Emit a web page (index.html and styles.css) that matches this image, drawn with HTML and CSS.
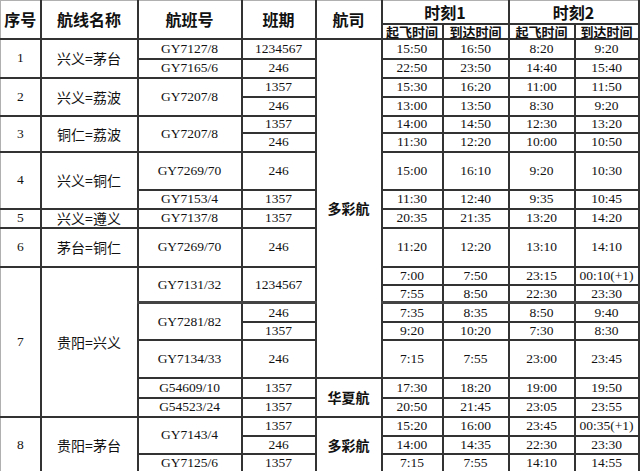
FILE: index.html
```html
<!DOCTYPE html>
<html lang="zh-CN">
<head>
<meta charset="utf-8">
<title>航班时刻表</title>
<link rel="stylesheet" href="styles.css">
</head>
<body>
<table class="sched">
  <colgroup>
    <col class="c-seq"><col class="c-route"><col class="c-flight"><col class="c-days"><col class="c-air">
    <col class="c-t1"><col class="c-t2"><col class="c-t3"><col class="c-t4">
  </colgroup>
  <thead>
    <tr class="r23 top">
      <th rowspan="2" class="hd first">序号</th>
      <th rowspan="2" class="hd">航线名称</th>
      <th rowspan="2" class="hd">航班号</th>
      <th rowspan="2" class="hd">班期</th>
      <th rowspan="2" class="hd">航司</th>
      <th colspan="2" class="hd">时刻1</th>
      <th colspan="2" class="hd">时刻2</th>
    </tr>
    <tr class="r15">
      <th class="sub">起飞时间</th><th class="sub">到达时间</th>
      <th class="sub">起飞时间</th><th class="sub">到达时间</th>
    </tr>
  </thead>
  <tbody>
    <tr class="r20">
      <td rowspan="2" class="first">1</td><td rowspan="2" class="cn">兴义=茅台</td><td>GY7127/8</td><td>1234567</td>
      <td rowspan="15" class="cn air">多彩航</td>
      <td>15:50</td><td>16:50</td><td>8:20</td><td>9:20</td>
    </tr>
    <tr class="r19">
      <td>GY7165/6</td><td>246</td><td>22:50</td><td>23:50</td><td>14:40</td><td>15:40</td>
    </tr>
    <tr class="r19">
      <td rowspan="2" class="first">2</td><td rowspan="2" class="cn">兴义=荔波</td><td rowspan="2">GY7207/8</td><td>1357</td>
      <td>15:30</td><td>16:20</td><td>11:00</td><td>11:50</td>
    </tr>
    <tr class="r19">
      <td>246</td><td>13:00</td><td>13:50</td><td>8:30</td><td>9:20</td>
    </tr>
    <tr class="r17">
      <td rowspan="2" class="first">3</td><td rowspan="2" class="cn">铜仁=荔波</td><td rowspan="2">GY7207/8</td><td>1357</td>
      <td>14:00</td><td>14:50</td><td>12:30</td><td>13:20</td>
    </tr>
    <tr class="r19">
      <td>246</td><td>11:30</td><td>12:20</td><td>10:00</td><td>10:50</td>
    </tr>
    <tr class="r38">
      <td rowspan="2" class="first">4</td><td rowspan="2" class="cn">兴义=铜仁</td><td>GY7269/70</td><td>246</td>
      <td>15:00</td><td>16:10</td><td>9:20</td><td>10:30</td>
    </tr>
    <tr class="r19">
      <td>GY7153/4</td><td>1357</td><td>11:30</td><td>12:40</td><td>9:35</td><td>10:45</td>
    </tr>
    <tr class="r19">
      <td class="first">5</td><td class="cn">兴义=遵义</td><td>GY7137/8</td><td>1357</td>
      <td>20:35</td><td>21:35</td><td>13:20</td><td>14:20</td>
    </tr>
    <tr class="r39">
      <td class="first">6</td><td class="cn">茅台=铜仁</td><td>GY7269/70</td><td>246</td>
      <td>11:20</td><td>12:20</td><td>13:10</td><td>14:10</td>
    </tr>
    <tr class="r18">
      <td rowspan="7" class="first">7</td><td rowspan="7" class="cn">贵阳=兴义</td><td rowspan="2">GY7131/32</td><td rowspan="2">1234567</td>
      <td>7:00</td><td>7:50</td><td>23:15</td><td>00:10(+1)</td>
    </tr>
    <tr class="r18">
      <td>7:55</td><td>8:50</td><td>22:30</td><td>23:30</td>
    </tr>
    <tr class="r19 thick">
      <td rowspan="2">GY7281/82</td><td>246</td>
      <td>7:35</td><td>8:35</td><td>8:50</td><td>9:40</td>
    </tr>
    <tr class="r18">
      <td>1357</td><td>9:20</td><td>10:20</td><td>7:30</td><td>8:30</td>
    </tr>
    <tr class="r38">
      <td>GY7134/33</td><td>246</td><td>7:15</td><td>7:55</td><td>23:00</td><td>23:45</td>
    </tr>
    <tr class="r20">
      <td>G54609/10</td><td>1357</td><td rowspan="2" class="cn air">华夏航</td>
      <td>17:30</td><td>18:20</td><td>19:00</td><td>19:50</td>
    </tr>
    <tr class="r19">
      <td>G54523/24</td><td>1357</td><td>20:50</td><td>21:45</td><td>23:05</td><td>23:55</td>
    </tr>
    <tr class="r19">
      <td rowspan="3" class="first">8</td><td rowspan="3" class="cn">贵阳=茅台</td><td rowspan="2">GY7143/4</td><td>1357</td>
      <td rowspan="3" class="cn air">多彩航</td>
      <td>15:20</td><td>16:00</td><td>23:45</td><td>00:35(+1)</td>
    </tr>
    <tr class="r18">
      <td>246</td><td>14:00</td><td>14:35</td><td>22:30</td><td>23:30</td>
    </tr>
    <tr class="r19">
      <td>GY7125/6</td><td>1357</td><td>7:15</td><td>7:55</td><td>14:10</td><td>14:55</td>
    </tr>
  </tbody>
</table>
</body>
</html>
```
FILE: styles.css
```css
html, body {
  margin: 0;
  padding: 0;
  background: #ffffff;
}

.sched {
  border-collapse: collapse;
  table-layout: fixed;
  width: 639px;
  font-family: "Liberation Serif", "Noto Sans CJK SC", serif;
  font-size: 13.5px;
  color: #111111;
}

.c-seq { width: 40px; }
.c-route { width: 97px; }
.c-flight { width: 104px; }
.c-days { width: 74px; }
.c-air { width: 66px; }
.c-t1 { width: 61px; }
.c-t2 { width: 66px; }
.c-t3 { width: 66px; }
.c-t4 { width: 64px; }

.sched th,
.sched td {
  border: 2px solid #333333;
  padding: 0;
  text-align: center;
  vertical-align: middle;
  line-height: 1;
  white-space: nowrap;
}

.sched .first { border-left: 1px solid #b0b0b0; }
.top th { border-top: 1px solid #b0b0b0; }

.sched th {
  font-family: "Noto Sans CJK SC", sans-serif;
  font-weight: 700;
}

.hd { font-size: 16px; }
.sub { font-size: 13px; }

.cn {
  font-family: "Noto Sans CJK SC", sans-serif;
  font-size: 14px;
}

.air { font-weight: 700; font-size: 14px; }

.r15 { height: 15px; }
.r17 { height: 17px; }
.r18 { height: 18px; }
.r19 { height: 19px; }
.r20 { height: 20px; }
.r23 { height: 23px; }
.r38 { height: 38px; }
.r39 { height: 39px; }

.thick td { border-top: 3px solid #444444; }
```
